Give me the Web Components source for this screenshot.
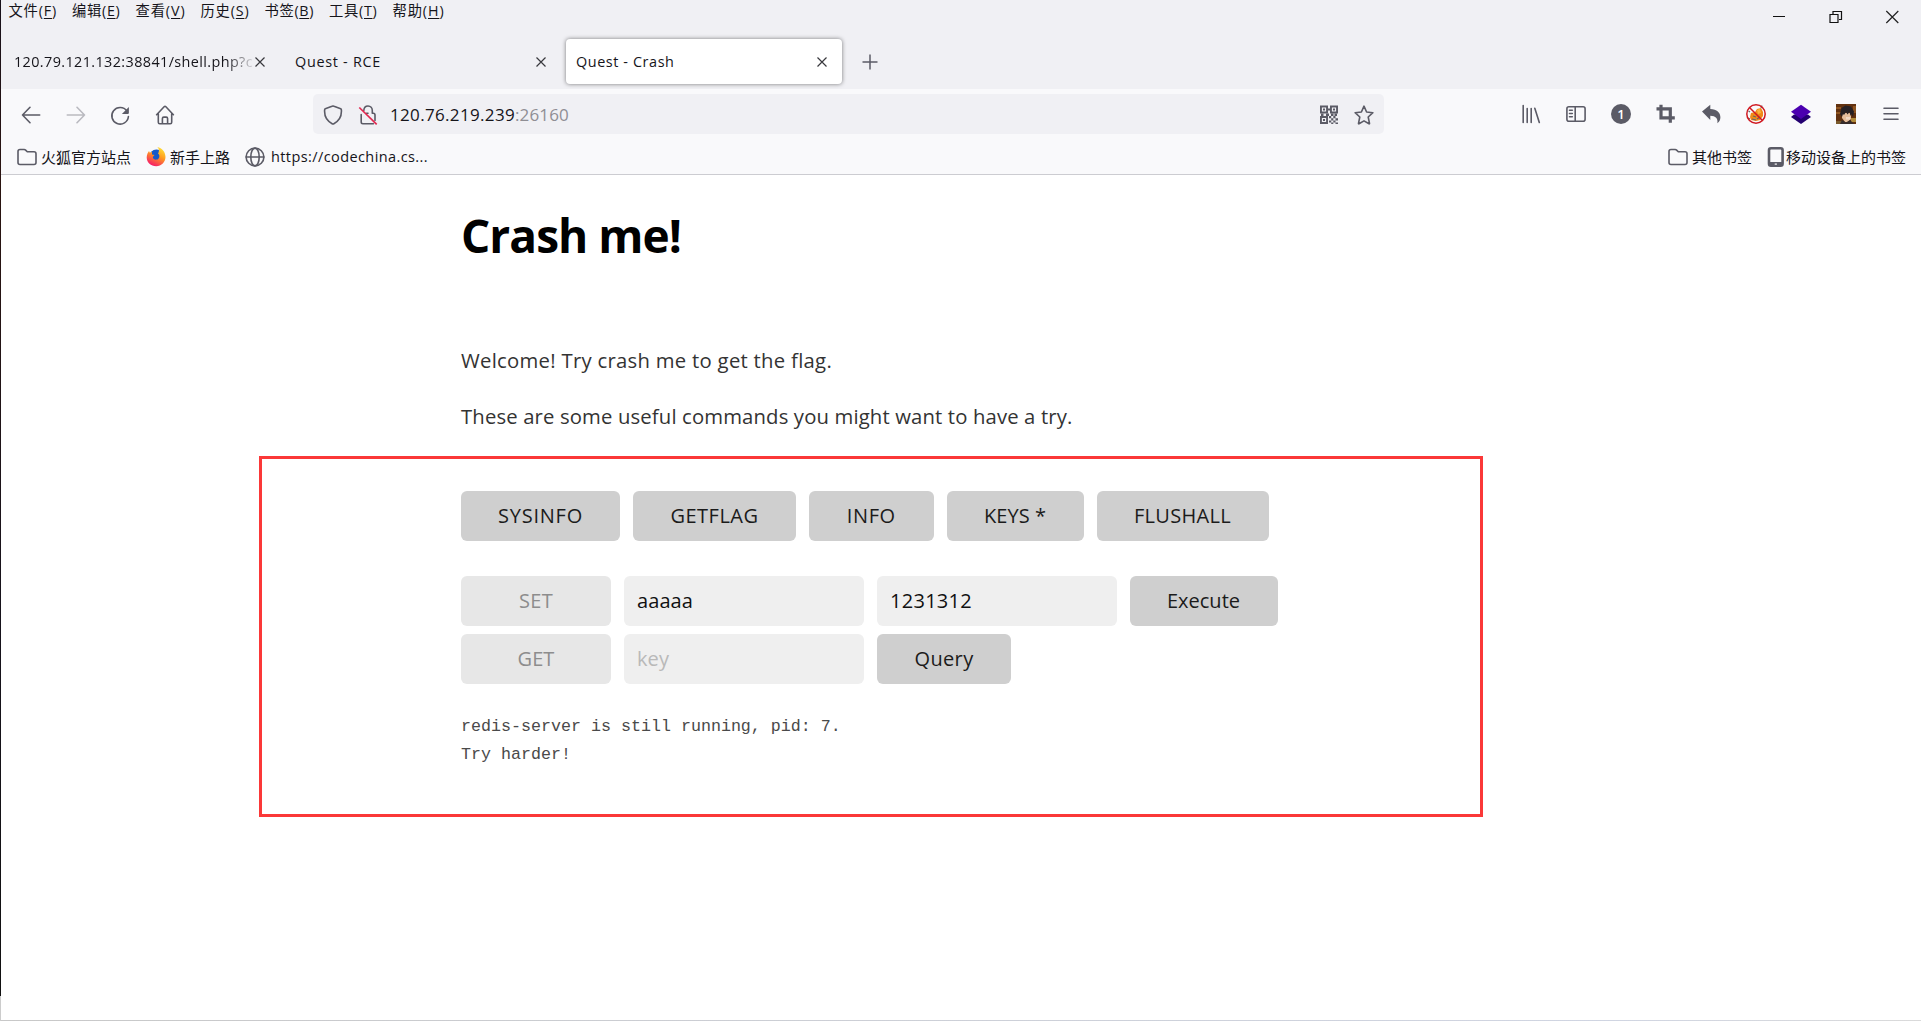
<!DOCTYPE html>
<html lang="zh-CN">
<head>
<meta charset="utf-8">
<title>Quest - Crash</title>
<style>
html,body{margin:0;height:100%}
body{background:#fff;overflow:hidden;font-family:"Open Sans","Noto Sans CJK SC",sans-serif;color:#15141a}
</style>
</head>
<body>
<browser-window></browser-window>
<script>
const def=(name,html,init)=>customElements.define(name,class extends HTMLElement{
  connectedCallback(){
    if(this.shadowRoot)return;
    const t=document.createElement('template');
    t.innerHTML=typeof html==='function'?html(this):html;
    this.attachShadow({mode:'open'}).append(t.content.cloneNode(true));
    if(init)init(this);
  }
});

/* One line of text whose tracking is adjusted to a given advance width. */
def('fit-text','<style>:host{display:block;white-space:pre;flex:none}span{display:inline-block}</style><span><slot></slot></span>',el=>{
  const s=el.shadowRoot.querySelector('span'),w=+el.getAttribute('w');
  if(!w)return;
  const n=[...el.textContent].length;
  s.style.letterSpacing=((w-s.getBoundingClientRect().width)/n)+'px';
  el.style.width=w+'px';
});

const S='fill="none" stroke="#5b5b66" stroke-width="1.6" stroke-linecap="round" stroke-linejoin="round"';
const F='fill="#5b5b66"';
const finder=(x,y)=>`<path ${F} fill-rule="evenodd" d="M${x} ${y}h8v8h-8zM${x+1.9} ${y+1.9}v4.2h4.2v-4.2z"/><path ${F} d="M${x+3} ${y+3}h2v2h-2z"/>`;
const ICONS={
 back:`<path ${S} d="M18.7 10H1.5M9 2.3 1.5 10 9 17.7"/>`,
 forward:`<g opacity=".4"><path ${S} d="M1.3 10h17.2M11 2.3l7.5 7.7-7.5 7.7"/></g>`,
 reload:`<path ${S} d="M16.9 6A8.3 8.3 0 1 0 18.4 11.5"/><path ${F} d="M18.9 1.9v6.2c0 .5-.3.8-.8.8h-6.2z"/>`,
 home:`<path ${S} d="M1.6 9.7 9.1 1.8q.9-.9 1.8 0l7.5 7.9M3.3 9v8.3q0 1.4 1.4 1.4h10.6q1.4 0 1.4-1.4V9M7.4 18.5v-5q0-1.4 1.4-1.4h2.4q1.4 0 1.4 1.4v5"/>`,
 shield:`<path ${S} d="M10 1q.5 0 1 .3l6.7 2.5q.7.3.7 1.1v1.7c0 6-3 9.700-7.500 12.100q-.9.500-1.800 0C4.600 16.300 1.600 12.600 1.600 6.600V4.900q0-.8.7-1.100L9 1.300q.5-.3 1-.3z"/>`,
 lock:`<path ${S} d="M5.800 5.500C6 2.500 7.800 1 10 1c2.600 0 4.300 2 4.300 4.500v2.800h1q1.700 0 1.700 1.700v5.500M3.200 9.500V17q0 1.700 1.700 1.700h10.500M8.500 8.300h1.500"/><path d="M1.300 2.500 18.700 19.300" stroke="#e22850" stroke-width="1.700" fill="none"/>`,
 qr:`${finder(1,.5)}${finder(11,.5)}${finder(1,11)}<path ${F} d="M8.500 3.500h3v2h-3zM2 8.500h2.500v2.500H2zM7 8.500h3v2.500H7zM12 8.500h2.500v2.500H12zM15.500 8.500H18v2.500h-2.500zM10 11h2.200v2.200H10zM14.300 11h2.200v2.200h-2.200zM12.200 13.200h2.100v2.200h-2.100zM16.500 13.200H19v2.200h-2.500zM10 15.400h2.200v2H10zM14.300 15.400h2.200v2h-2.200zM12.200 17.400h2.100V19h-2.100zM16.500 17.400H19V19h-2.500z"/>`,
 star:`<path ${S} d="m10 1.200 2.600 5.800 6.300.7-4.700 4.300 1.300 6.300q.1.700-.5.500L10 15.900l-5 2.900q-.6.200-.5-.5L5.800 12 1.100 7.700 7.400 7z"/>`,
 library:`<path ${S} d="M2.200 1.500v17M6.200 4.500v14M10.200 4.500v14M13.800 4.300l4.500 14.200"/>`,
 sidebar:`<rect ${S} x=".9" y="2.700" width="18.200" height="14.600" rx="2"/><path ${S} d="M9.200 3v14M3.500 6.300h2.800M3.500 9.500h2.800M3.500 12.700h2.800"/>`,
 crop:`<path fill="none" stroke="#5b5b66" stroke-width="3.200" d="M5 .8v13h13.800M.5 4.800h13.800v14"/>`,
 reply:`<path ${F} d="M1 7.400 9.300.8v4.100c6.600.3 10.100 3.700 10.100 8.300 0 2.500-1.100 4.700-3 6 .7-4.800-1.700-7.400-7.100-7.500v4.200z"/>`,
 fox:`<path fill="#f08a18" d="M4 13 5 9l4-1 2-3 4-1 2 4v4l-3 4-4 1-5-1z"/><path d="M4 8 2.500 7M4 15l-2-1M15 4l1-2.500M7 12l3 1M11 15l3-2M6 15l4 1" stroke="#666" stroke-width="1.200"/><path fill="#fcb43d" d="m11 6 3-1 1 4-3 1z"/><circle cx="10" cy="10" r="9.200" fill="none" stroke="#d01820" stroke-width="1.500"/><path d="M3.500 3.500l13 13" stroke="#d01820" stroke-width="1.500"/>`,
 layers:`<path fill="#240070" d="m0 13 3-2.500h14l3 2.500-10 7z"/><path fill="#4b00b0" d="M10 .7 20 7.800 10 15 0 7.800z"/>`,
 avatar:`<path fill="#62310f" d="M0 0h20v20H0z"/><path fill="#8f5521" d="M0 3h5v2H0zM0 8h5v2H0zM17 2h3v7h-3z"/><path fill="#7a5a2c" d="M0 17h6v3H0z"/><path fill="#b08a3a" d="M15 14h5v4h-5z"/><path fill="#e4bd9b" d="M6 9h9v6l-3 3H9l-3-4z"/><path fill="#262023" d="M4 10 5.500 4l4-2.500 5.500 1 3 5-1 5.500-1.500-3-1 2-1-4-2 2.500-1.500-2.500L8 11l-1-1-1 3z"/><path fill="#362c2c" d="m4 20 2-4 4 2.500 4-2.500 4 4z"/><path fill="#f0d8c4" d="M10 13h4v2.500h-4z"/>`,
 menu:`<path ${S} d="M3 4.200h14M3 9.700h14M3 15.200h14"/>`,
 folder:`<path ${S} d="M1 15.500v-11q0-2 2-2h4.200q.8 0 1.400.6l1.700 1.700H17q2 0 2 2v8.700q0 2-2 2H3q-2 0-2-2z"/>`,
 globe:`<g ${S}><circle cx="10" cy="10" r="8.900"/><ellipse cx="10" cy="10" rx="4.200" ry="8.900"/><path d="M1.200 10h17.600"/></g>`,
 phone:`<rect x="3" y="1.200" width="13.600" height="17.600" rx="2" fill="#f9f9fb" stroke="#5b5b66" stroke-width="2.600"/><path ${F} d="M3 15h13.600v4H3z"/><path fill="#f9f9fb" d="M8.700 16.500h2.200v1.200H8.700z"/>`,
 firefox:`<defs><linearGradient id="g" x1=".8" y1="0" x2=".3" y2="1"><stop offset="0" stop-color="#ffe63a"/><stop offset=".45" stop-color="#ff9a1f"/><stop offset="1" stop-color="#f5156c"/></linearGradient></defs><circle cx="10.500" cy="10" r="7.500" fill="#1559c9"/><path fill="url(#g)" d="M1.500 6.500 3 4l1 2 2-1.500v3l2.500.5-1.700 2c.2 3 4.200 3.500 5.800 1.500 1.300-1.500 1-4-.6-5 2-3 .5-5.500-.7-6.500 4.700.8 8.200 5 8.200 10 0 5-4 9.200-9.300 9.200S.7 15.500.7 10.500c0-1.500.3-2.800.8-4z"/>`
};
def('ui-icon',el=>`<style>:host{display:flex;align-items:center;justify-content:center;width:var(--cell,20px);height:20px;flex:none}svg{display:block;overflow:visible}</style><svg width="20" height="20" viewBox="0 0 20 20">${ICONS[el.getAttribute('name')]}</svg>`);

def('count-icon','<style>:host{display:flex;justify-content:center;width:45px;flex:none}b{width:20px;height:20px;border-radius:50%;background:#5b5b66;color:#fff;font:600 13px/20px "Open Sans",sans-serif;text-align:center}</style><b><slot></slot></b>');

def('menu-bar',`<style>:host{display:flex;justify-content:space-between;height:33px;padding-left:7.500px;font-size:14.300px}
.m{display:flex;gap:15px;line-height:21px}.w{display:flex;padding-right:.5px}.w svg{width:56.500px;height:33px}u{text-underline-offset:2px;text-decoration-thickness:1px}</style>
<div class="m">${[['文件','F',48.5],['编辑','E',48.5],['查看','V',50],['历史','S',49],['书签','B',49.5],['工具','T',48.5],['帮助','H',52]].map(a=>`<fit-text w="${a[2]}">${a[0]}(<u>${a[1]}</u>)</fit-text>`).join('')}</div>
<div class="w"><svg viewBox="0 0 56.500 33"><path d="M22 16.500h12" stroke="#111" fill="none"/></svg><svg viewBox="0 0 56.500 33"><path d="M22 14.500h8v8h-8zM25 14v-2.500h8.500v8H31" stroke="#111" fill="none" stroke-width="1.200"/></svg><svg viewBox="0 0 56.500 33"><path d="m22.300 11 12 12m0-12-12 12" stroke="#222" fill="none" stroke-width="1.200"/></svg></div>`);

def('browser-tab',`<style>:host{display:flex;align-items:center;box-sizing:border-box;width:276px;height:45px;padding:0 14px 0 10px;border-radius:4px;font-size:14.400px;flex:none;justify-content:space-between}
:host([selected]){background:#fff;box-shadow:0 0 4px rgba(0,0,0,.5)}
:host([fade]){padding-right:14px}:host([fade]) div{-webkit-mask:linear-gradient(90deg,#000 212px,transparent 242px)}
div{overflow:hidden;max-width:240px;line-height:24px}svg{width:12px;height:12px;flex:none}</style>
<div><slot></slot></div><svg viewBox="0 0 12 12"><path d="m1.500 1.500 9 9m0-9-9 9" stroke="#38383d" stroke-width="1.200" fill="none"/></svg>`);

def('tab-strip',`<style>:host{display:flex;gap:5px;height:50px;padding:6px 0 0 3px;box-sizing:border-box}.plus{width:16px;height:16px;margin:15px 0 0 14.500px}.one{width:276px}</style>
<browser-tab fade><fit-text w="239">120.79.121.132:38841/shell.php?c</fit-text></browser-tab>
<browser-tab><fit-text w="86">Quest - RCE</fit-text></browser-tab>
<browser-tab selected><fit-text w="98.500">Quest - Crash</fit-text></browser-tab>
<svg class="plus" viewBox="0 0 16 16"><path d="M8 .5v15M.5 8h15" stroke="#5b5b66" stroke-width="1.500"/></svg>`);

def('url-bar',`<style>:host{display:flex;align-items:center;box-sizing:border-box;width:1071px;height:40px;background:#f0f0f4;border-radius:5px;padding:1px 10px 0;flex:none}
.t{display:flex;font-size:17px;line-height:26px;flex:1;margin-left:12px}.p{color:#8f8e94}.a{margin-left:15px}</style>
<ui-icon name="shield"></ui-icon><ui-icon class="a" name="lock"></ui-icon><div class="t"><fit-text w="125">120.76.219.239</fit-text><fit-text class="p" w="54">:26160</fit-text></div><ui-icon name="qr"></ui-icon><ui-icon class="a" name="star"></ui-icon>`);

def('nav-bar',`<style>:host{display:flex;align-items:center;justify-content:space-between;height:50px;padding:0 7.500px 0 7.500px;--cell:45px}.g{display:flex}url-bar{--cell:20px;margin-left:-10px}.l{width:314.500px;padding-top:1px}.r{margin-left:auto}.l ui-icon{--cell:44.800px}</style>
<div class="g l"><ui-icon name="back"></ui-icon><ui-icon name="forward"></ui-icon><ui-icon name="reload"></ui-icon><ui-icon name="home"></ui-icon></div>
<url-bar></url-bar>
<div class="g r">${['library','sidebar'].map(i=>`<ui-icon name="${i}"></ui-icon>`).join('')}<count-icon>1</count-icon>${['crop','reply','fox','layers','avatar','menu'].map(i=>`<ui-icon name="${i}"></ui-icon>`).join('')}</div>`);

def('book-mark',el=>`<style>:host{display:flex;align-items:center;gap:var(--g,5px);font-size:15px;line-height:24px}</style><ui-icon name="${el.getAttribute('icon')}"></ui-icon><slot></slot>`);
def('bookmarks-bar',`<style>:host{display:flex;justify-content:space-between;height:35px;padding:0 15px 0 16px;border-bottom:1px solid #ccccd1}.g{display:flex;gap:15px}.r{gap:14px}</style>
<div class="g"><book-mark icon="folder" style="--g:4px"><fit-text w="90">火狐官方站点</fit-text></book-mark><book-mark icon="firefox" style="--g:4px"><fit-text w="60">新手上路</fit-text></book-mark><book-mark icon="globe" style="--g:6px"><fit-text w="157" style="font-size:14.500px">https://codechina.cs...</fit-text></book-mark></div>
<div class="g r"><book-mark icon="folder" style="--g:4px"><fit-text w="60">其他书签</fit-text></book-mark><book-mark icon="phone" style="--g:0px"><fit-text w="120">移动设备上的书签</fit-text></book-mark></div>`);

def('cmd-button',`<style>:host{display:flex;align-items:center;justify-content:center;box-sizing:border-box;height:50px;border-radius:6px;background:#cfcfcf;color:#1b1b1b;font-size:20px;line-height:28px;padding-bottom:1px;flex:none}:host([disabled]){background:#e7e7e7;color:#8d8d8d}</style><slot></slot>`,el=>el.style.width=el.getAttribute('width')+'px');
def('text-field',`<style>:host{display:flex;align-items:center;box-sizing:border-box;height:50px;border-radius:6px;background:#efefef;color:#111;font-size:20px;line-height:28px;padding:0 0 1px 13px;flex:none}:host([empty]){color:#b9b9b9}</style><slot></slot>`,el=>el.style.width=el.getAttribute('width')+'px');

def('crash-page',`<style>:host{display:block;height:845px;background:#fff;color:#333}
h1{margin:0;padding:28px 0 0 460px;font-size:46px;line-height:64px;color:#000;font-weight:700}
p{margin:0;padding-left:460px;font-size:20.300px;line-height:32px}.p1{padding-top:77px}.p2{padding-top:24px}
section{box-sizing:border-box;width:1224px;height:361px;margin:24px 0 0 258px;border:3px solid #fb3838;padding:32px 0 0 199px}
.row{display:flex;gap:13px}.r2{margin-top:35px}.r3{margin-top:8px}
pre{margin:29px 0 0;font:16.670px/28px "Liberation Mono",monospace;color:#4a4a4a}</style>
<h1><fit-text w="220">Crash me!</fit-text></h1>
<p class="p1"><fit-text w="371">Welcome! Try crash me to get the flag.</fit-text></p>
<p class="p2"><fit-text w="611.500">These are some useful commands you might want to have a try.</fit-text></p>
<section>
<div class="row"><cmd-button width="159"><fit-text w="85">SYSINFO</fit-text></cmd-button><cmd-button width="163"><fit-text w="88">GETFLAG</fit-text></cmd-button><cmd-button width="124.500"><fit-text w="49">INFO</fit-text></cmd-button><cmd-button width="137"><fit-text w="62">KEYS *</fit-text></cmd-button><cmd-button width="172"><fit-text w="97">FLUSHALL</fit-text></cmd-button></div>
<div class="row r2"><cmd-button disabled width="150"><fit-text w="34">SET</fit-text></cmd-button><text-field width="240"><fit-text w="56">aaaaa</fit-text></text-field><text-field width="239.500"><fit-text w="82">1231312</fit-text></text-field><cmd-button width="148"><fit-text w="73">Execute</fit-text></cmd-button></div>
<div class="row r3"><cmd-button disabled width="150"><fit-text w="37">GET</fit-text></cmd-button><text-field empty width="240"><fit-text w="32">key</fit-text></text-field><cmd-button width="134"><fit-text w="59">Query</fit-text></cmd-button></div>
<pre>redis-server is still running, pid: 7.
Try harder!</pre>
</section>`);

def('browser-window',`<style>:host{display:flex;width:1921px;height:1021px;overflow:hidden}
.edge{width:1px;flex:none;background:linear-gradient(#17101a 0,#2a1410 180px,#17131c 600px,#111 996px,#ccc 996px)}
.win{width:1920px}.top{background:#f0f0f4;height:89px}menu-bar{box-sizing:border-box}.bars{background:#f9f9fb}.foot{height:1px;background:linear-gradient(90deg,#c8c8c8,#d0d5e2 84%,#dadada)}</style>
<div class="edge"></div><div class="win"><div class="top"><menu-bar></menu-bar><tab-strip></tab-strip></div><div class="bars"><nav-bar></nav-bar><bookmarks-bar></bookmarks-bar></div><crash-page></crash-page><div class="foot"></div></div>`);
</script>
</body>
</html>
